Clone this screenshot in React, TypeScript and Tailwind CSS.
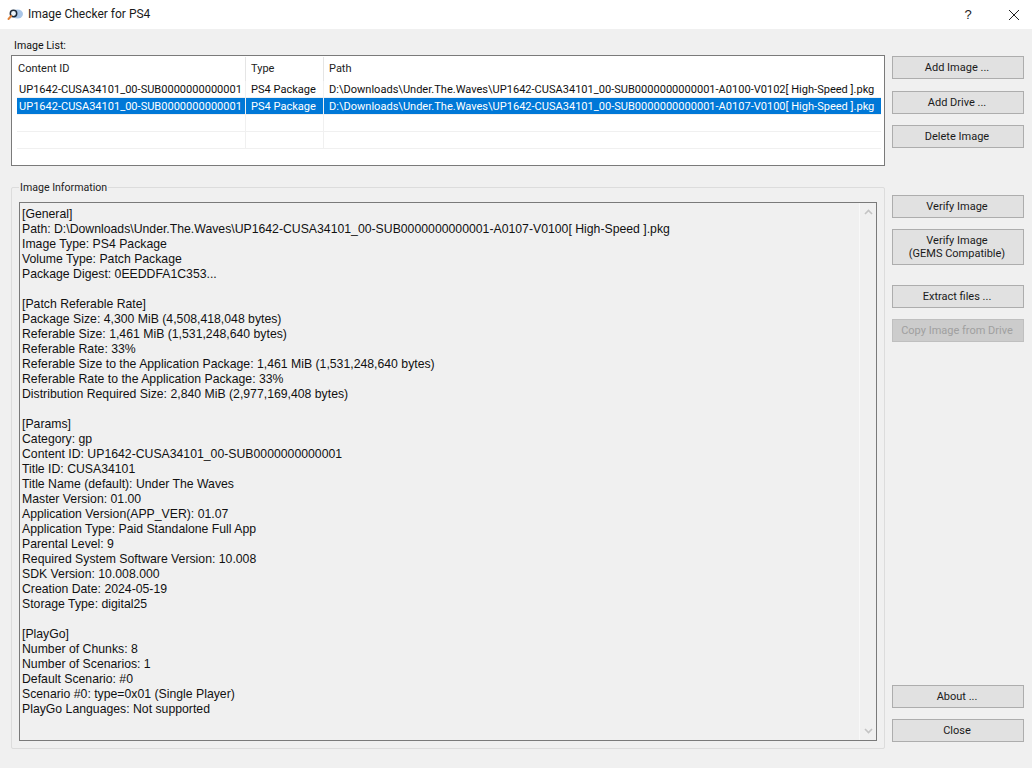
const PATH_A = "D:\\Downloads\\Under.The.Waves\\UP1642-CUSA34101_00-SUB0000000000001-A0100-V0102[ High-Speed ].pkg";
const PATH_B = "D:\\Downloads\\Under.The.Waves\\UP1642-CUSA34101_00-SUB0000000000001-A0107-V0100[ High-Speed ].pkg";
const CONTENT_ID = "UP1642-CUSA34101_00-SUB0000000000001";

const INFO_LINES = [
  "[General]",
  `Path: ${PATH_B}`,
  "Image Type: PS4 Package",
  "Volume Type: Patch Package",
  "Package Digest: 0EEDDFA1C353...",
  "",
  "[Patch Referable Rate]",
  "Package Size: 4,300 MiB (4,508,418,048 bytes)",
  "Referable Size: 1,461 MiB (1,531,248,640 bytes)",
  "Referable Rate: 33%",
  "Referable Size to the Application Package: 1,461 MiB (1,531,248,640 bytes)",
  "Referable Rate to the Application Package: 33%",
  "Distribution Required Size: 2,840 MiB (2,977,169,408 bytes)",
  "",
  "[Params]",
  "Category: gp",
  `Content ID: ${CONTENT_ID}`,
  "Title ID: CUSA34101",
  "Title Name (default): Under The Waves",
  "Master Version: 01.00",
  "Application Version(APP_VER): 01.07",
  "Application Type: Paid Standalone Full App",
  "Parental Level: 9",
  "Required System Software Version: 10.008",
  "SDK Version: 10.008.000",
  "Creation Date: 2024-05-19",
  "Storage Type: digital25",
  "",
  "[PlayGo]",
  "Number of Chunks: 8",
  "Number of Scenarios: 1",
  "Default Scenario: #0",
  "Scenario #0: type=0x01 (Single Player)",
  "PlayGo Languages: Not supported",
];

function Btn({ children, disabled, className = "h-[23px]" }: { children: React.ReactNode; disabled?: boolean; className?: string }) {
  return (
    <button
      disabled={disabled}
      className={`w-[132px] shrink-0 border pr-[2px] leading-[13px] text-center font-['Roboto',sans-serif] text-[11px] ${className} ${
        disabled ? "bg-[#cccccc] border-[#bfbfbf] text-[#a0a0a0]" : "bg-[#e1e1e1] border-[#adadad] text-[#1a1a1a]"
      }`}
    >
      {children}
    </button>
  );
}

function Row({ id, type, path, selected }: { id?: string; type?: string; path?: string; selected?: boolean }) {
  return (
    <div className={`flex h-[17px] border-b border-[#f0f0f0] leading-[17px] font-['Roboto',sans-serif] text-[11.05px] ${selected ? "bg-[#0078d7] text-white" : "text-[#111]"}`}>
      <div className="w-[229px] shrink-0 h-full pl-[2px] whitespace-nowrap border-r border-[#f0f0f0]">{id}</div>
      <div className="w-[78px] shrink-0 h-full pl-[5px] whitespace-nowrap border-r border-[#f0f0f0]">{type}</div>
      <div className="pl-[5px] whitespace-nowrap">{path}</div>
    </div>
  );
}

export default function App() {
  return (
    <div className="w-[1032px] h-[768px] bg-[#f0f0f0] flex flex-col text-[12.25px] text-[#111] overflow-hidden font-['Liberation_Sans',Arial,sans-serif]">
      {/* Title bar */}
      <div className="h-[29px] shrink-0 bg-white flex items-center pl-[7px]">
        <svg width="16" height="16" viewBox="0 0 16 16" className="shrink-0">
          <ellipse cx="10.5" cy="7" rx="5.5" ry="4.5" fill="#a9c6e8" />
          <circle cx="6.5" cy="6.5" r="3.2" fill="#eef5fb" stroke="#1d2a3a" strokeWidth="1.5" />
          <path d="M4.2 9 L1.5 12" stroke="#e0823a" strokeWidth="2" strokeLinecap="round" />
        </svg>
        <span className="ml-[5px] mb-[2px] text-[#1a1a1a] text-[12px] font-['Roboto',sans-serif] whitespace-nowrap">Image Checker for PS4</span>
        <div className="ml-auto flex items-center">
          <span className="w-[56px] text-center text-[13px] text-[#222]">?</span>
          <span className="w-[36px] flex justify-center">
            <svg width="12" height="12" viewBox="0 0 12 12">
              <path d="M1 1 L11 11 M11 1 L1 11" stroke="#222" strokeWidth="1" fill="none" />
            </svg>
          </span>
        </div>
      </div>

      {/* Body */}
      <div className="flex-1 flex pl-[11px] pr-[8px] pt-[10px] pb-[19px]">
        {/* Left column */}
        <div className="w-[874px] shrink-0 flex flex-col">
          <div className="h-[16px] pl-[3px] leading-[14px] text-[10.6px] font-['Roboto',sans-serif]">Image List:</div>
          <div className="h-[111px] shrink-0 border border-[#7a7a7a] bg-white pt-[1px] pl-[5px] pr-[3px] pb-[2px]">
            <div className="flex h-[24px] items-center text-[#222] text-[11px] font-['Roboto',sans-serif]">
              <div className="w-[229px] shrink-0 h-full flex items-center pl-[1px] border-r border-[#e5e5e5]">Content ID</div>
              <div className="w-[78px] shrink-0 h-full flex items-center pl-[5px] border-r border-[#e5e5e5]">Type</div>
              <div className="pl-[5px]">Path</div>
            </div>
            <Row id={CONTENT_ID} type="PS4 Package" path={PATH_A} />
            <Row id={CONTENT_ID} type="PS4 Package" path={PATH_B} selected />
            <Row />
            <Row />
          </div>

          <fieldset className="relative mt-[21px] flex-1 min-h-0 border border-[#dcdcdc] rounded-[2px] pt-[14px] pl-[7px] pr-[7px] pb-[7px] flex">
            <span className="absolute left-[7px] top-[-7px] bg-[#f0f0f0] px-[1px] leading-[14px] text-[#222] text-[10.6px] font-['Roboto',sans-serif]">Image Information</span>
            <div className="flex-1 border border-[#7a7a7a] flex min-w-0">
              <div className="flex-1 pl-[2px] pt-[4px] leading-[15px] text-[#111] min-w-0">
                {INFO_LINES.map((line, i) => (
                  <div key={i} className="h-[15px] whitespace-nowrap">{line}</div>
                ))}
              </div>
              <div className="w-[17px] shrink-0 flex flex-col items-center justify-between py-[6px] border-l border-[#f8f8f8]">
                <svg width="9" height="6" viewBox="0 0 9 6"><path d="M1 5 L4.5 1.5 L8 5" stroke="#c4c4c4" strokeWidth="1.6" fill="none" /></svg>
                <svg width="9" height="6" viewBox="0 0 9 6"><path d="M1 1 L4.5 4.5 L8 1" stroke="#c4c4c4" strokeWidth="1.6" fill="none" /></svg>
              </div>
            </div>
          </fieldset>
        </div>

        {/* Button column */}
        <div className="ml-[7px] flex flex-col pt-[17px] pb-[7px]">
          <Btn>Add Image ...</Btn>
          <Btn className="h-[23px] mt-[12px]">Add Drive ...</Btn>
          <Btn className="h-[23px] mt-[11px]">Delete Image</Btn>
          <Btn className="h-[23px] mt-[47px]">Verify Image</Btn>
          <Btn className="h-[36px] mt-[11px]">
            Verify Image
            <br />
            (GEMS Compatible)
          </Btn>
          <Btn className="h-[23px] mt-[20px]">Extract files ...</Btn>
          <Btn disabled className="h-[23px] mt-[11px]">Copy Image from Drive</Btn>
          <Btn className="h-[23px] mt-auto">About ...</Btn>
          <Btn className="h-[23px] mt-[11px]">Close</Btn>
        </div>
      </div>
    </div>
  );
}
